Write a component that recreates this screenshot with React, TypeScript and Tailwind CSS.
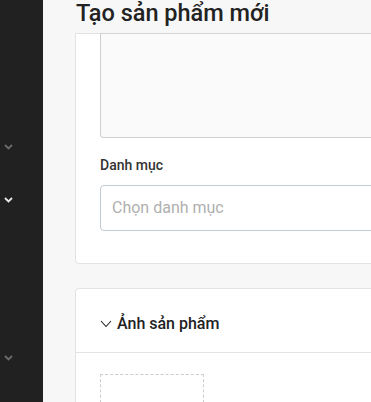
import React from "react";

function Chev() {
  return (
    <svg width="9" height="6" viewBox="0 0 9 6" fill="none">
      <path d="M1 1l3.5 3.5L8 1" stroke="currentColor" strokeWidth="1.8" />
    </svg>
  );
}

export default function App() {
  return (
    <div
      className="flex h-[402px] w-[371px] overflow-hidden bg-[#f7f7f7]"
      style={{ fontFamily: "Roboto, 'Noto Sans', sans-serif" }}
    >
      <div className="relative w-[43px] shrink-0 bg-[#212121]">
        <div className="absolute left-[4px] top-[144px] text-[#6b6b6b]">
          <Chev />
        </div>
        <div className="absolute left-[4px] top-[197px] text-[#e8e8e8]">
          <Chev />
        </div>
        <div className="absolute left-[4px] top-[355px] text-[#6b6b6b]">
          <Chev />
        </div>
      </div>
      <div className="flex min-w-0 flex-1 flex-col pl-[32px]">
        <div className="h-[33px] shrink-0 pl-[1px] text-[23.5px] leading-[26px] font-medium text-[#222]">
          Tạo sản phẩm mới
        </div>
        <div className="w-[340px] shrink-0 rounded-b-[4px] border border-[#e3e3e3] bg-white pl-[24px] pb-[32px]">
          <div className="-mt-px h-[105px] rounded-b-[4px] border border-t-[#d4d4d4] border-[#cfcfcf] bg-[#fafafa]"></div>
          <div className="mt-[19px] text-[14px] leading-[17px] font-medium text-[#333]">Danh mục</div>
          <div className="mt-[11px] flex h-[46px] items-center rounded-[4px] border border-[#c3cbd1] px-[11px] pb-[1px] text-[16px] text-[#b0b0b0]">
            Chọn danh mục
          </div>
        </div>
        <div className="mt-[24px] w-[340px] shrink-0 rounded-t-[4px] border border-[#e3e3e3] bg-white">
          <div className="flex h-[64px] items-center gap-[5px] border-b border-[#e3e3e3] pl-[24px] pt-[6px]">
            <svg width="12" height="8" viewBox="0 0 12 8" fill="none" className="text-[#222]">
              <path d="M1 1l5 5.5L11 1" stroke="currentColor" strokeWidth="1.1" />
            </svg>
            <span className="text-[16px] font-medium text-[#222]">Ảnh sản phẩm</span>
          </div>
          <div className="pl-[24px] pt-[21px]">
            <div className="h-[60px] w-[104px] border border-dashed border-[#cccccc]"></div>
          </div>
        </div>
      </div>
    </div>
  );
}
